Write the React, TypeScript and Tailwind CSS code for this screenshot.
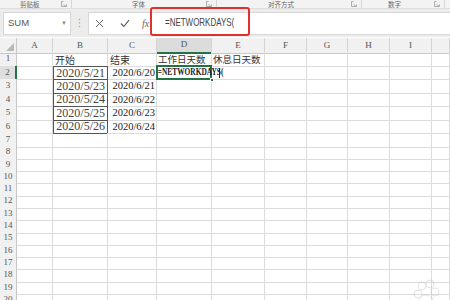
import React from 'react'

const cols = ['A', 'B', 'C', 'D', 'E', 'F', 'G', 'H', 'I', '']
const gridCols = 'grid grid-cols-[17px_36px_55px_49px_55px_53px_42px_41px_42px_42px_1fr]'

const startDates = ['2020/5/21', '2020/5/23', '2020/5/24', '2020/5/25', '2020/5/26']
const endDates = ['2020/6/20', '2020/6/21', '2020/6/22', '2020/6/23', '2020/6/24']

const serif = "font-['Liberation_Serif','Noto_Sans_CJK_SC',serif]"
const cjk = "font-['Noto_Sans_CJK_SC',sans-serif]"

const Launcher = () => (
  <svg width="6" height="6" viewBox="0 0 6 6" className="shrink-0">
    <path d="M0.5 0.5 H2.5 M0.5 0.5 V5.5 H5.5 V3.5 M2.5 3.5 L5 5.5" stroke="#9a9a9a" strokeWidth="0.8" fill="none" />
  </svg>
)

const RibbonGroup = ({ label, width, pad }: { label: string; width: string; pad: string }) => (
  <div className={`${width} ${pad} flex items-center h-full border-r border-[#d6d6d6] pr-[4px]`}>
    <span className={`${cjk} text-[6.5px] leading-none text-[#666]`}>{label}</span>
    <span className="ml-auto">
      <Launcher />
    </span>
  </div>
)

const Cell = ({ children, className = '' }: { children?: React.ReactNode; className?: string }) => (
  <div className={`border-r border-b border-[#dcdcdc] flex items-end pb-[1px] whitespace-nowrap ${className}`}>{children}</div>
)

const SheetRow = ({ n }: { n: number }) => {
  const tall = n <= 6
  const h = tall ? 'h-[13.5px]' : 'h-[12.3px]'
  const idx = n - 2
  const isDate = n >= 2 && n <= 6
  return (
    <div className={`${gridCols} ${h}`}>
      <div
        className={`${serif} flex items-center justify-center text-[9px] text-[#555] border-b border-[#d4d4d4] ${
          n === 2 ? 'bg-[#dedede] border-r-2 border-r-[#217346]' : 'bg-[#f1f1f1] border-r border-r-[#c8c8c8]'
        }`}
      >
        {n}
      </div>
      <Cell />
      {n === 1 ? (
        <Cell className={`${cjk} text-[10px] text-[#333] pl-[2px] leading-none`}>开始</Cell>
      ) : isDate ? (
        <div
          className={`${serif} border-x border-b border-[#555] ${n === 2 ? 'border-t' : ''} flex items-center justify-end pr-[2px] text-[12px] text-[#444] leading-none`}
        >
          {startDates[idx]}
        </div>
      ) : (
        <Cell />
      )}
      {n === 1 ? (
        <Cell className={`${cjk} text-[10px] text-[#333] pl-[2px] leading-none`}>结束</Cell>
      ) : isDate ? (
        <Cell className={`${serif} justify-end pr-[1px] text-[10.5px] text-[#222] leading-none items-center pb-0`}>
          {endDates[idx]}
        </Cell>
      ) : (
        <Cell />
      )}
      {n === 1 ? (
        <Cell className={`${cjk} text-[9.5px] text-[#333] pl-[1px] leading-none`}>工作日天数</Cell>
      ) : n === 2 ? (
        <div className="relative border-r border-b border-[#dcdcdc] flex items-center">
          <span className="relative z-10 pl-[1px] font-['Liberation_Serif',serif] font-bold text-[10px] leading-none text-[#222] origin-left scale-x-[0.74] whitespace-nowrap">
            =NETWORKDAYS(
          </span>
          <span className="absolute left-[62px] top-[2px] w-px h-[10px] bg-[#222]" />
          <span className="absolute -left-[1px] -top-[1px] -right-[1px] -bottom-[1px] border-2 border-[#217346]" />
          <span className="absolute -right-[3px] -bottom-[3px] w-[4px] h-[4px] bg-[#217346] border border-white" />
        </div>
      ) : (
        <Cell />
      )}
      {n === 1 ? (
        <Cell className={`${cjk} text-[9.5px] text-[#333] pl-[1px] leading-none`}>休息日天数</Cell>
      ) : (
        <Cell />
      )}
      <Cell />
      <Cell />
      <Cell />
      <Cell />
      <Cell />
    </div>
  )
}

export default function App() {
  return (
    <div className="relative w-[450px] h-[300px] overflow-hidden bg-white">
      {/* ribbon group labels */}
      <div className="flex h-[9px] bg-[#f3f3f3] border-b border-[#dedede]">
        <RibbonGroup label="剪贴板" width="w-[72px]" pad="pl-[20px]" />
        <RibbonGroup label="字体" width="w-[145px]" pad="pl-[60px]" />
        <RibbonGroup label="对齐方式" width="w-[145px]" pad="pl-[51px]" />
        <RibbonGroup label="数字" width="w-[83px]" pad="pl-[26px]" />
      </div>

      {/* formula bar */}
      <div className="flex items-center h-[28px] bg-[#ececec] pl-[3px]">
        <div className="w-[68px] h-[23px] bg-white border border-[#d8d8d8] flex items-center pl-[4px] pr-[3px]">
          <span className="font-['Liberation_Sans',sans-serif] text-[9.5px] text-[#555]">SUM</span>
          <span className="ml-auto text-[6px] text-[#888]">▼</span>
        </div>
        <div className="w-[17px] flex justify-center">
          <svg width="3" height="10" viewBox="0 0 3 10">
            <circle cx="1.5" cy="1.5" r="0.8" fill="#aaa" />
            <circle cx="1.5" cy="5" r="0.8" fill="#aaa" />
            <circle cx="1.5" cy="8.5" r="0.8" fill="#aaa" />
          </svg>
        </div>
        <div className="flex-1 h-[23px] bg-white border-y border-l border-[#d8d8d8] flex items-center">
          <svg width="9" height="9" viewBox="0 0 9 9" className="ml-[6px]">
            <path d="M1 1 L8 8 M8 1 L1 8" stroke="#666" strokeWidth="1" />
          </svg>
          <svg width="10" height="9" viewBox="0 0 10 9" className="ml-[16px]">
            <path d="M1 4.5 L3.8 7.5 L9 1.2" stroke="#555" strokeWidth="1.1" fill="none" />
          </svg>
          <span className="ml-[12px] font-['Liberation_Serif',serif] italic text-[10px] text-[#666]">fx</span>
          <span className="ml-[16px] font-['Liberation_Sans',sans-serif] text-[10.5px] text-[#444] origin-left scale-x-[0.76] whitespace-nowrap">
            =NETWORKDAYS(
          </span>
        </div>
      </div>

      {/* annotation box */}
      <div className="absolute left-[150px] top-[7px] w-[100px] h-[29px] border-2 border-[#e2302c] rounded-[3px]" />

      {/* column headers */}
      <div className={`${gridCols} h-[14px] mt-[1px]`}>
        <div className="bg-[#f1f1f1] border-r border-b border-[#c8c8c8] relative">
          <svg width="8" height="8" viewBox="0 0 8 8" className="absolute right-[2px] bottom-[2px]">
            <path d="M8 0 V8 H0 Z" fill="#b8b8b8" />
          </svg>
        </div>
        {cols.map((c, i) => (
          <div
            key={i}
            className={`${serif} flex items-center justify-center text-[9px] text-[#555] border-r border-[#d4d4d4] ${
              c === 'D' ? 'bg-[#dcdcdc] border-b-2 border-b-[#217346]' : 'bg-[#f1f1f1] border-b border-b-[#c8c8c8]'
            }`}
          >
            {c}
          </div>
        ))}
      </div>

      {/* sheet */}
      {Array.from({ length: 20 }, (_, i) => (
        <SheetRow key={i} n={i + 1} />
      ))}

      {/* faint watermark */}
      <svg width="40" height="26" viewBox="0 0 40 26" className="absolute right-[2px] bottom-[-4px] opacity-40">
        <circle cx="14" cy="8" r="4" fill="none" stroke="#bbb" strokeWidth="1" />
        <circle cx="22" cy="6" r="4" fill="none" stroke="#bbb" strokeWidth="1" />
        <circle cx="10" cy="16" r="4" fill="none" stroke="#bbb" strokeWidth="1" />
        <circle cx="27" cy="14" r="4" fill="none" stroke="#bbb" strokeWidth="1" />
        <ellipse cx="18" cy="22" rx="7" ry="5" fill="none" stroke="#bbb" strokeWidth="1" />
      </svg>
    </div>
  )
}
